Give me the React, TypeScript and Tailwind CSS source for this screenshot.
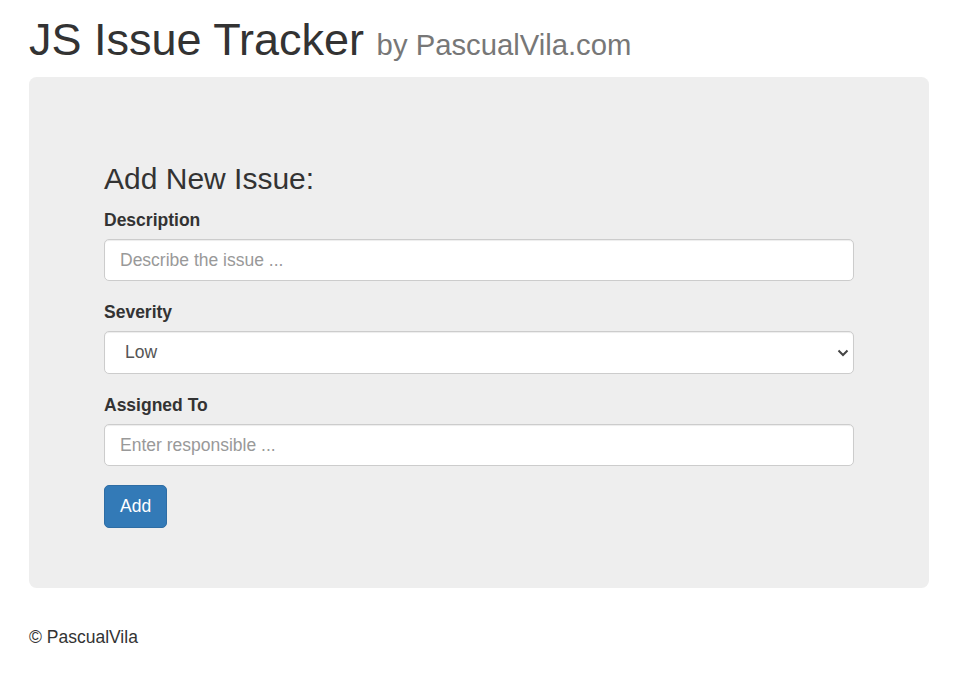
export default function App() {
  return (
    <div className="w-[957px] min-h-[674px] bg-white text-[#333] font-['Liberation_Sans',Arial,sans-serif] text-[17.5px] leading-[25px]">
      <div className="mx-[29px] w-[900px]">
        {/* Header */}
        <h1 className="mt-[15px] mb-[12.5px] h-[49.5px] text-[45px] leading-[49.5px] font-normal text-[#333] whitespace-nowrap">
          JS Issue Tracker <small className="text-[29.25px] leading-none text-[#777]">by PascualVila.com</small>
        </h1>

        {/* Jumbotron */}
        <div className="bg-[#eee] rounded-[7.5px] px-[75px] py-[60px] mb-[37.5px]">
          <h3 className="mt-[25px] mb-[12.5px] text-[30px] leading-[33px] font-normal">Add New Issue:</h3>
          <form onSubmit={(e) => e.preventDefault()}>
            <div className="mb-[18.75px]">
              <label className="block mb-[6.25px] font-bold">Description</label>
              <input
                type="text"
                placeholder="Describe the issue ..."
                className="block w-full h-[42.5px] px-[15px] py-[7.5px] bg-white border border-[#ccc] rounded-[5px] shadow-[inset_0_1px_1px_rgba(0,0,0,0.075)] text-[17.5px] text-[#555] placeholder:text-[#999] outline-none"
              />
            </div>
            <div className="mb-[18.75px]">
              <label className="block mb-[6.25px] font-bold">Severity</label>
              <div className="relative">
                <select
                  defaultValue="Low"
                  className="block w-full h-[42.5px] pl-[20px] pr-[30px] bg-white border border-[#ccc] rounded-[5px] shadow-[inset_0_1px_1px_rgba(0,0,0,0.075)] text-[17.5px] text-[#555] appearance-none outline-none"
                >
                  <option>Low</option>
                  <option>Medium</option>
                  <option>High</option>
                </select>
                <svg
                  className="absolute right-[5px] top-[18px] pointer-events-none"
                  width="12"
                  height="8"
                  viewBox="0 0 12 8"
                >
                  <path d="M1.5 1.5 L6 6 L10.5 1.5" fill="none" stroke="#444" strokeWidth="2" />
                </svg>
              </div>
            </div>
            <div className="mb-[18.75px]">
              <label className="block mb-[6.25px] font-bold">Assigned To</label>
              <input
                type="text"
                placeholder="Enter responsible ..."
                className="block w-full h-[42.5px] px-[15px] py-[7.5px] bg-white border border-[#ccc] rounded-[5px] shadow-[inset_0_1px_1px_rgba(0,0,0,0.075)] text-[17.5px] text-[#555] placeholder:text-[#999] outline-none"
              />
            </div>
            <button
              type="submit"
              className="block h-[42.5px] px-[15px] bg-[#337ab7] border border-[#2e6da4] rounded-[5px] text-white text-[17.5px] leading-[25px]"
            >
              Add
            </button>
          </form>
        </div>

        {/* Footer */}
        <p className="m-0">© PascualVila</p>
      </div>
    </div>
  );
}
